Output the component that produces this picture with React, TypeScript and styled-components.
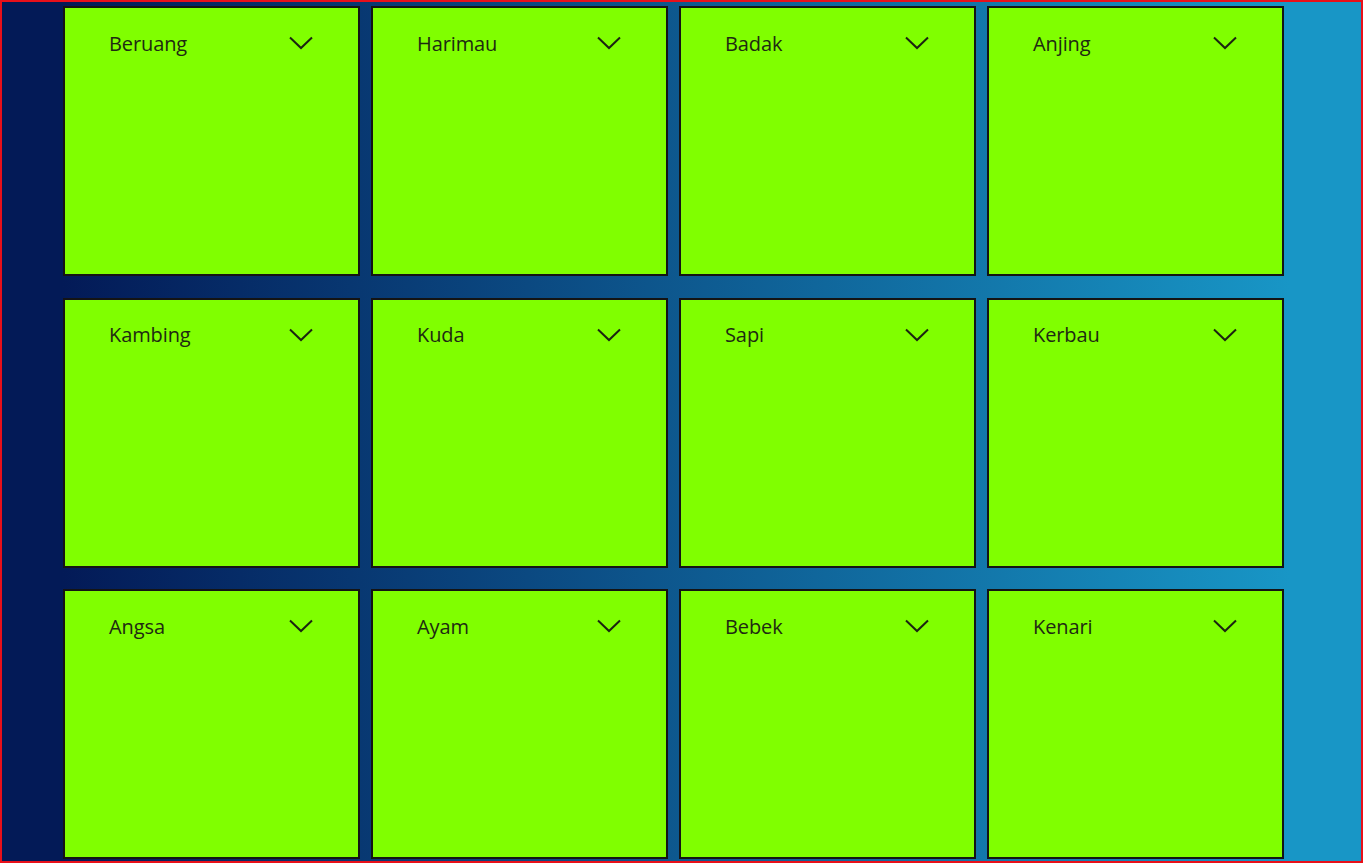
import React from "react";
import styled, { createGlobalStyle } from "styled-components";

const Global = createGlobalStyle`
  html, body { margin: 0; padding: 0; height: 100%; }
  body { font-family: "Open Sans", "Noto Sans", "Liberation Sans", sans-serif; }
`;

const Frame = styled.div`
  box-sizing: border-box;
  width: 1363px;
  height: 863px;
  border: 2px solid #e8101a;
  background: linear-gradient(to right, #031a57 61px, #1896c6 1288px);
  padding: 4px 0 0 61px;
  overflow: hidden;
`;

const Grid = styled.div`
  display: grid;
  grid-template-columns: repeat(4, 297px);
  grid-auto-rows: 270px;
  column-gap: 11px;
  row-gap: 21.5px;
`;

const Card = styled.div`
  box-sizing: border-box;
  background: #80ff00;
  border: 2px solid #141414;
  padding: 20px 45px 0 44px;
`;

const Header = styled.div`
  display: flex;
  align-items: center;
  justify-content: space-between;
  height: 30px;
`;

const Title = styled.span`
  font-size: 20px;
  color: #1e2a12;
  letter-spacing: -0.1px;
`;

const Chevron = () => (
  <svg width="24" height="14" viewBox="0 0 24 14" fill="none">
    <path d="M1 1.5 L12 12 L23 1.5" stroke="#1b2410" strokeWidth="2" />
  </svg>
);

const animals = [
  "Beruang", "Harimau", "Badak", "Anjing",
  "Kambing", "Kuda", "Sapi", "Kerbau",
  "Angsa", "Ayam", "Bebek", "Kenari",
];

export default function App() {
  return (
    <>
      <Global />
      <Frame>
        <Grid>
          {animals.map((a) => (
            <Card key={a}>
              <Header>
                <Title>{a}</Title>
                <Chevron />
              </Header>
            </Card>
          ))}
        </Grid>
      </Frame>
    </>
  );
}
